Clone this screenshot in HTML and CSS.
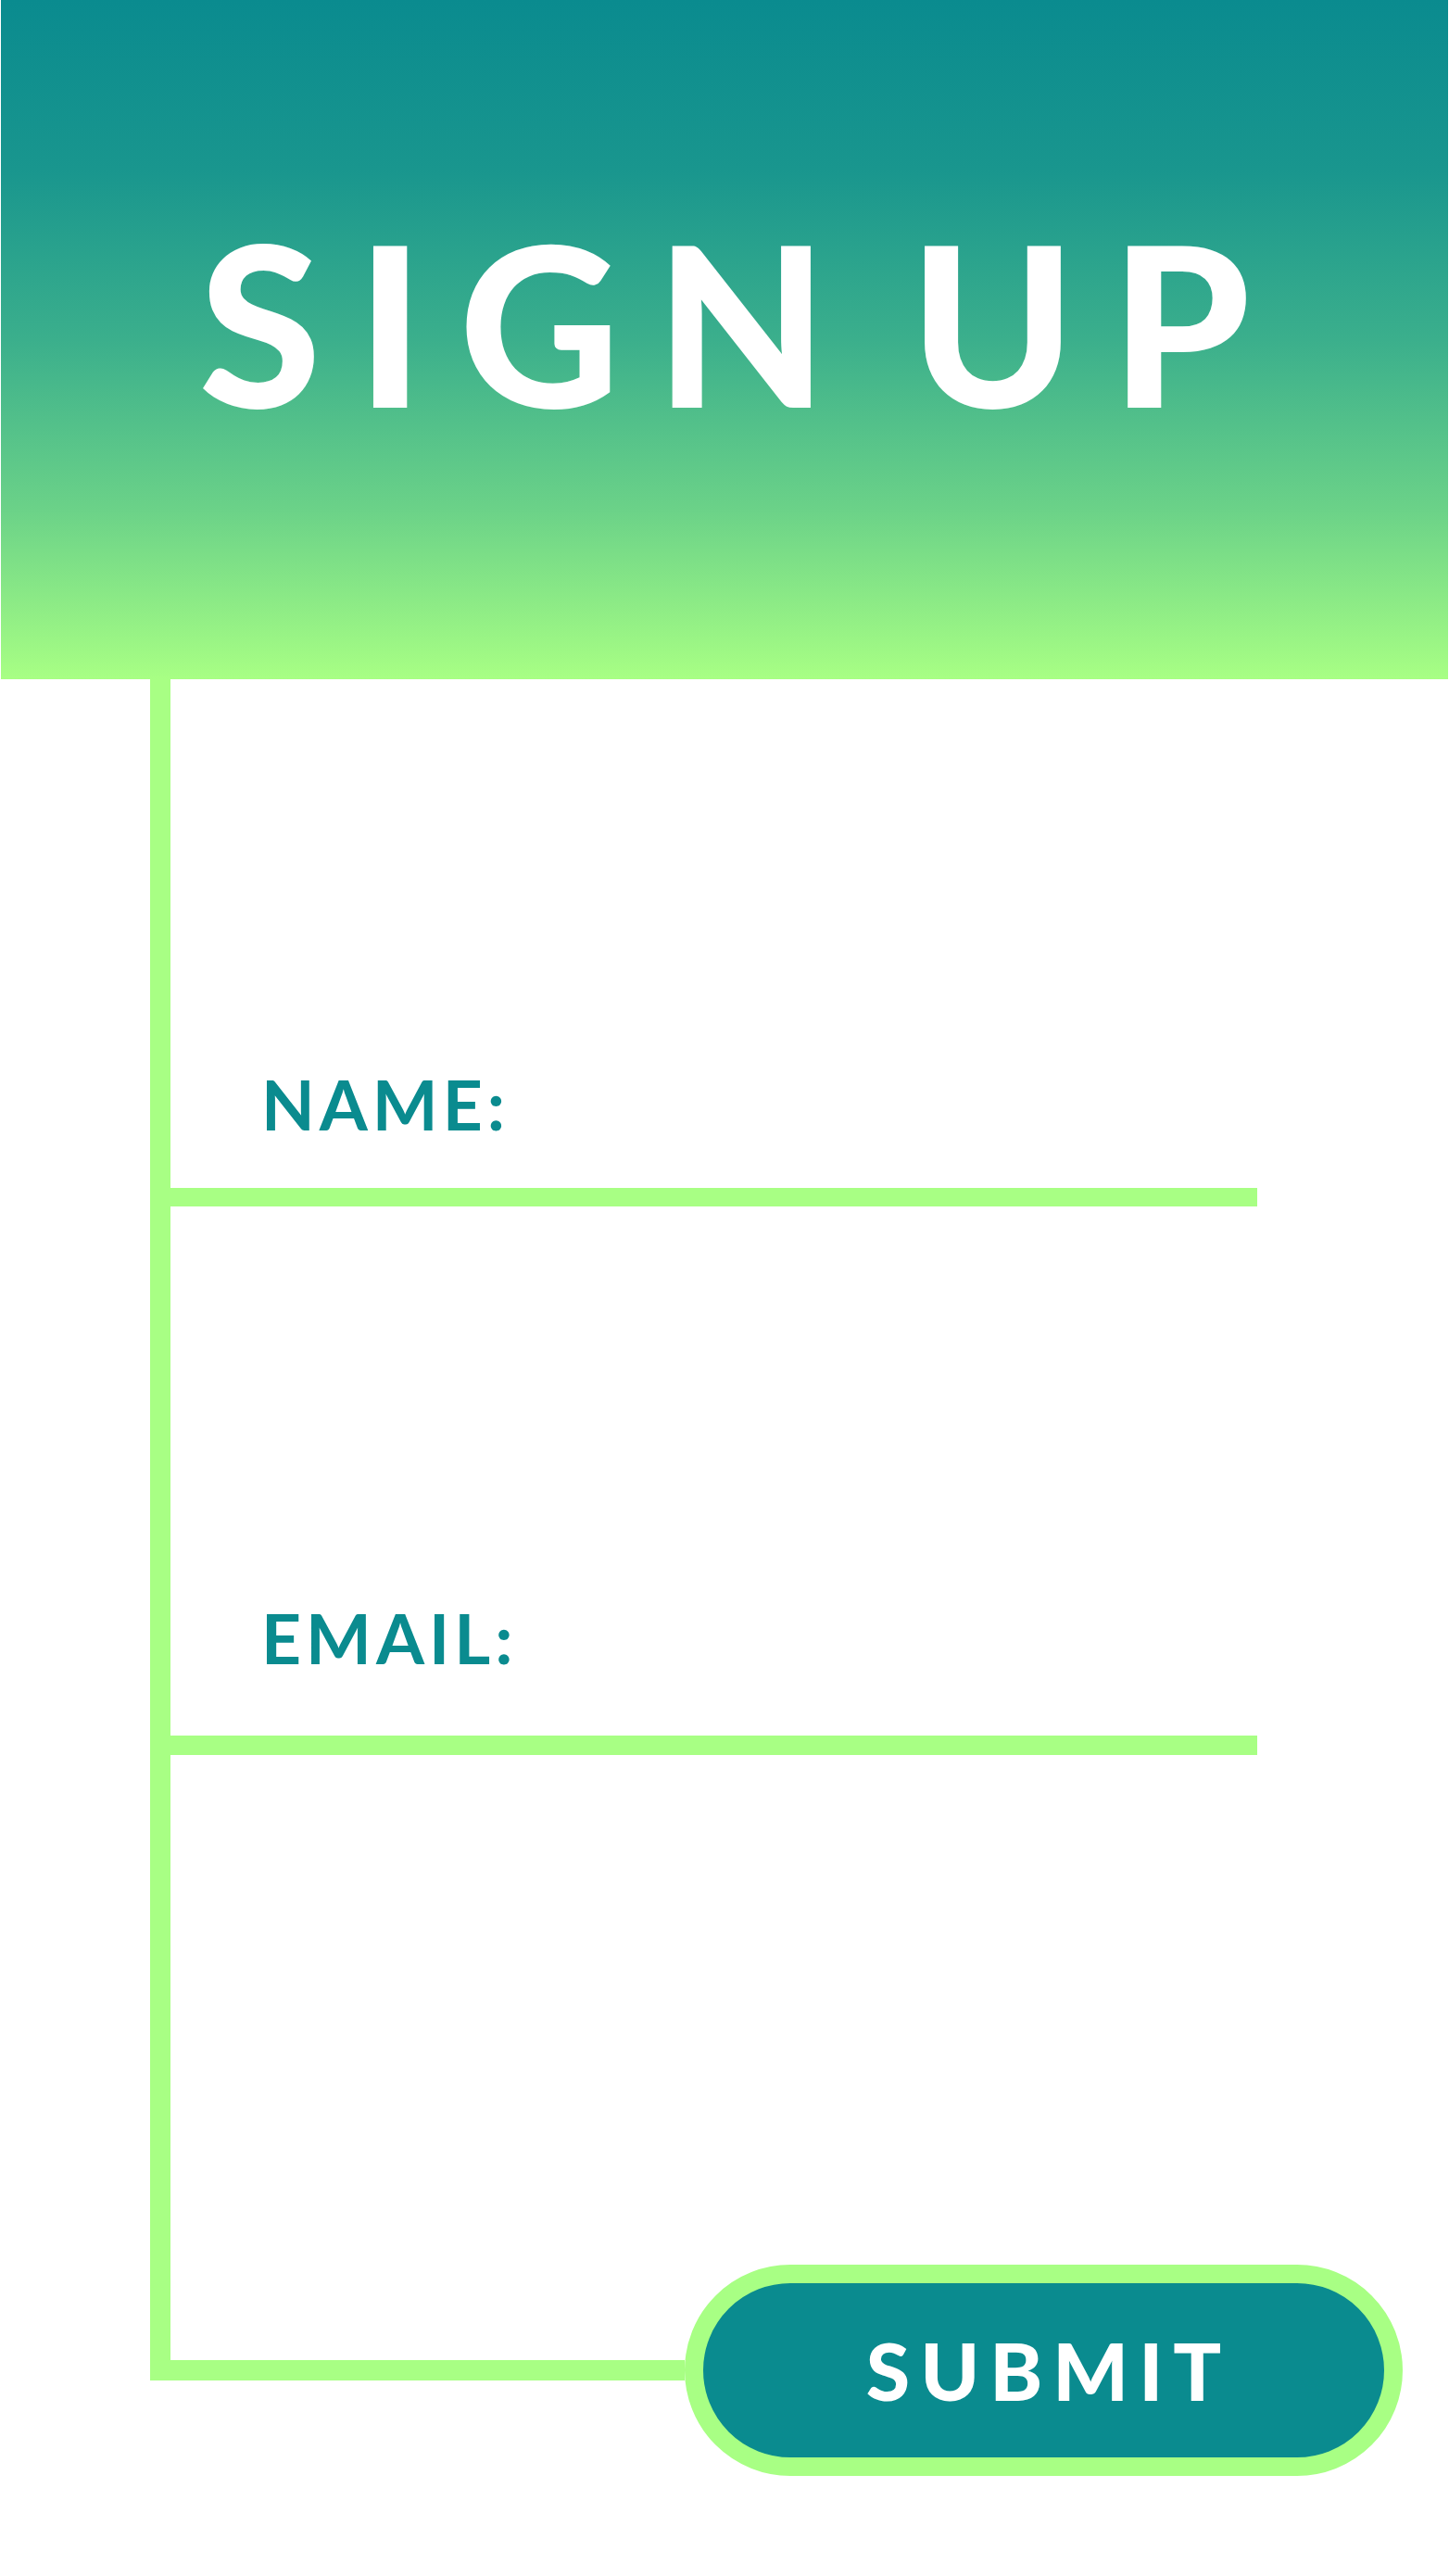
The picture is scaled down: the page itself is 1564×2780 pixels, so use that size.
FILE: index.html
```html
<!DOCTYPE html>
<html lang="en">
<head>
<meta charset="utf-8">
<title>Sign Up</title>
<link rel="stylesheet" href="styles.css">
</head>
<body>
<header class="hero">
  <h1 class="hero-title">SIGN UP</h1>
</header>
<main class="frame">
  <form class="form">
    <div class="field field-name">
      <label class="field-label">NAME:</label>
      <div class="field-line"></div>
    </div>
    <div class="field field-email">
      <label class="field-label">EMAIL:</label>
      <div class="field-line"></div>
    </div>
    <div class="submit-row">
      <div class="connector"></div>
      <button type="button" class="submit">SUBMIT</button>
    </div>
  </form>
</main>
</body>
</html>
```
FILE: styles.css
```css
html, body {
  margin: 0;
  padding: 0;
  background: #ffffff;
}
body {
  width: 1564px;
  height: 2780px;
  overflow: hidden;
  font-family: "Lato", "Liberation Sans", sans-serif;
}
.hero {
  box-sizing: border-box;
  width: 1562px;
  height: 733px;
  margin-left: 1px;
  padding-bottom: 39px;
  display: flex;
  align-items: center;
  justify-content: center;
  background: linear-gradient(to bottom,
    #0a8b8f 0%,
    #19968e 25%,
    #3baf8c 50%,
    #6bd288 75%,
    #a8ff84 100%);
}
.hero-title {
  margin: 0 -38px 0 0;
  font-size: 240px;
  line-height: 1;
  font-weight: 900;
  color: #ffffff;
  letter-spacing: 38px;
  word-spacing: -44px;
  white-space: nowrap;
}
.frame {
  margin-left: 162px;
  border-left: 22px solid #a8ff84;
}
.form {
  display: flex;
  flex-direction: column;
  align-items: flex-start;
  padding-top: 421px;
}
.field {
  display: flex;
  flex-direction: column;
  align-items: flex-start;
}
.field-label {
  padding-left: 98px;
  font-size: 75px;
  line-height: 75px;
  font-weight: 700;
  color: #0a8b8f;
  letter-spacing: 5px;
}
.field-line {
  width: 1173px;
  height: 20px;
  background: #a8ff84;
}
.field-name .field-line {
  margin-top: 53px;
}
.field-email {
  margin-top: 428px;
}
.field-email .field-line {
  margin-top: 68px;
  height: 21px;
}
.submit-row {
  display: flex;
  align-items: center;
  height: 22px;
  margin-top: 653px;
}
.connector {
  flex: 0 0 555px;
  height: 22px;
  background: #a8ff84;
}
.submit {
  flex: 0 0 auto;
  box-sizing: border-box;
  width: 775px;
  height: 228px;
  border: 20px solid #a8ff84;
  border-radius: 114px;
  background: #0a8b8f;
  color: #ffffff;
  font-family: "Lato", "Liberation Sans", sans-serif;
  font-weight: 900;
  font-size: 86px;
  line-height: 1;
  letter-spacing: 11px;
  padding: 0 0 0 11px;
  display: flex;
  align-items: center;
  justify-content: center;
}
```
